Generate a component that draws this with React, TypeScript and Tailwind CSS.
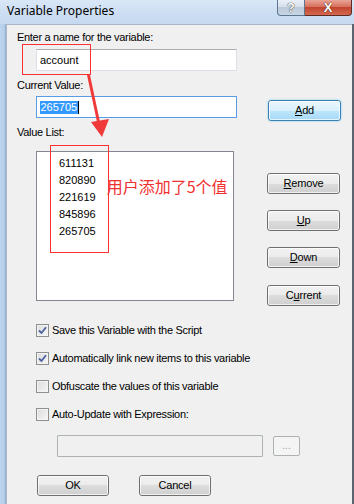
import React from "react";

const ui = { fontFamily: '"Liberation Sans", Arial, sans-serif' };

function Btn({ label, u, w = "w-[73px]", primary = false }: { label: string; u?: number; w?: string; primary?: boolean }) {
  const chars = label.split("");
  return (
    <div
      className={`${w} h-[21px] rounded-[3px] border flex items-center justify-center text-[11px] text-black relative ${
        primary
          ? "border-[#3c7fb1] bg-[linear-gradient(#eaf6fd_0%,#d9f0fc_50%,#bee6fd_50%,#a7d9f5_100%)] shadow-[0_0_2px_#6ac5f0]"
          : "border-[#707070] bg-[linear-gradient(#f2f2f2_0%,#ebebeb_50%,#dddddd_50%,#cfcfcf_100%)]"
      }`}
    >
      <div className="absolute inset-0 rounded-[2px] border border-white/70 pointer-events-none" />
      <span className="relative tracking-[-0.2px]">
        {chars.map((c, i) => (
          <span key={i} className={u === i ? "underline underline-offset-[1px]" : ""}>
            {c}
          </span>
        ))}
      </span>
    </div>
  );
}

function Check({ checked, label }: { checked: boolean; label: string }) {
  return (
    <div className="flex items-center h-[13px]">
      <div className="w-[13px] h-[13px] border border-[#8e8f8f] bg-[linear-gradient(135deg,#dcdcdc,#f6f6f6)] flex items-center justify-center shrink-0">
        <div className="w-[11px] h-[11px] border border-[#f4f4f4] flex items-center justify-center">
          {checked && (
            <svg width="9" height="9" viewBox="0 0 9 9">
              <path d="M1 4.5 L3.5 7 L8 1.2" stroke="#4b61a0" strokeWidth="1.8" fill="none" />
            </svg>
          )}
        </div>
      </div>
      <span className="ml-[3px] text-[11px] text-black tracking-[-0.3px] leading-[13px]">{label}</span>
    </div>
  );
}

export default function App() {
  return (
    <div className="w-[354px] h-[504px] relative overflow-hidden bg-[#cfe0f4]" style={ui}>
      {/* title bar */}
      <div className="h-[24px] flex items-start bg-[linear-gradient(180deg,#d9e7f7_0%,#cbddf2_60%,#c5d9f0_100%)] relative">
        <span
          className="ml-[7px] mt-[4px] text-[12px] leading-[14px] text-black"
          style={{ fontFamily: '"Noto Sans", "Open Sans", sans-serif' }}
        >
          Variable Properties
        </span>
        <div className="ml-auto flex mr-[2px]">
          <div className="w-[28px] h-[16px] border border-[#5d7591] border-t-0 rounded-bl-[4px] bg-[linear-gradient(#eaf0f7_0%,#d3dde9_50%,#bccadb_50%,#c7d5e5_100%)] flex items-center justify-center">
            <span className="text-[12px] font-bold text-white leading-none" style={{ textShadow: "0 0 1px #333, 0 0 1px #333" }}>?</span>
          </div>
          <div className="w-[47px] h-[16px] border border-[#5e2a23] border-t-0 border-l-0 rounded-br-[4px] bg-[linear-gradient(#e8a395_0%,#d7715f_45%,#c1452f_50%,#d36a4f_100%)] flex items-center justify-center">
            <span className="text-[13px] font-bold text-white leading-none" style={{ textShadow: "0 0 1px #4a1a12, 0 0 1px #4a1a12" }}>X</span>
          </div>
        </div>
      </div>

      {/* frame + client */}
      <div className="flex h-[480px]">
        <div className="w-[6px] h-full bg-[linear-gradient(90deg,#bcd4ee_0%,#b6cfea_70%,#8fa9c6_100%)]" />
        <div className="flex-1 h-full bg-[#f0f0f0] border-t border-l border-[#a9b8c9] flex flex-col pl-[10px] text-black">
          <div className="mt-[6px] text-[11px] leading-[13px] tracking-[-0.3px]">Enter a name for the variable:</div>
          <div className="ml-[19px] mt-[5px] w-[201px] h-[22px] bg-white border border-[#dcdfe6] border-t-[#abadb3] flex items-center pl-[3px] text-[11px]">
            account
          </div>
          <div className="mt-[8px] text-[11px] leading-[13px] tracking-[-0.3px]">Current Value:</div>
          <div className="flex items-start mt-[4px]">
            <div className="ml-[19px] w-[201px] h-[22px] bg-white border border-[#569de5] flex items-center pl-[3px] text-[11px]">
              <span className="bg-[#3399ff] text-white leading-[13px] px-[0.5px]">265705</span>
              <span className="w-px h-[13px] bg-black" />
            </div>
            <div className="ml-[31px] mt-[4px]">
              <Btn label="Add" u={0} primary />
            </div>
          </div>
          <div className="mt-[5px] text-[11px] leading-[13px] tracking-[-0.3px]">Value List:</div>
          <div className="flex items-start mt-[12px]">
            <div className="ml-[19px] w-[198px] h-[150px] bg-white border border-[#828790] flex">
              <div className="ml-[22px] mt-[3px] flex flex-col text-[11px] leading-[17px]">
                <span>611131</span>
                <span>820890</span>
                <span>221619</span>
                <span>845896</span>
                <span>265705</span>
              </div>
              <span
                className="ml-[11px] mt-[24px] text-[16px] leading-[20px] text-[#f03030] whitespace-nowrap"
                style={{ fontFamily: '"Noto Sans CJK SC", "Noto Sans", sans-serif' }}
              >
                用户添加了5个值
              </span>
            </div>
            <div className="ml-[33px] mt-[22px] flex flex-col">
              <Btn label="Remove" u={0} />
              <div className="mt-[16px]"><Btn label="Up" u={0} /></div>
              <div className="mt-[16px]"><Btn label="Down" u={0} /></div>
              <div className="mt-[17px]"><Btn label="Current" u={1} /></div>
            </div>
          </div>
          <div className="ml-[19px] mt-[18px] flex flex-col gap-[15px]">
            <Check checked label="Save this Variable with the Script" />
            <Check checked label="Automatically link new items to this variable" />
            <Check checked={false} label="Obfuscate the values of this variable" />
            <Check checked={false} label="Auto-Update with Expression:" />
          </div>
          <div className="flex items-center ml-[40px] mt-[14px]">
            <div className="w-[206px] h-[22px] bg-[#f0f0f0] border border-[#adb2b5] rounded-[1px]" />
            <div className="ml-[10px] w-[27px] h-[20px] border border-[#adb2b5] rounded-[2px] bg-[#f4f4f4] flex items-center justify-center text-[10px] text-[#a0a0a0] leading-none">
              ...
            </div>
          </div>
          <div className="flex ml-[20px] mt-[18px]">
            <Btn label="OK" w="w-[72px]" />
            <div className="ml-[30px]"><Btn label="Cancel" w="w-[72px]" /></div>
          </div>
        </div>
        <div className="w-[2px] h-full bg-[#5c6470]" />
      </div>

      {/* annotations */}
      <div className="absolute left-[22px] top-[44px] w-[69px] h-[31px] border border-[#ff3030]" />
      <div className="absolute left-[50px] top-[145px] w-[59px] h-[108px] border border-[#ff3030]" />
      <svg className="absolute left-0 top-0" width="354" height="504">
        <path d="M87 75 L90 75 L100 122 L97 122 Z" fill="#f03a3a" />
        <path d="M91 122 L109 119 L102 137 Z" fill="#f03a3a" />
      </svg>
    </div>
  );
}
